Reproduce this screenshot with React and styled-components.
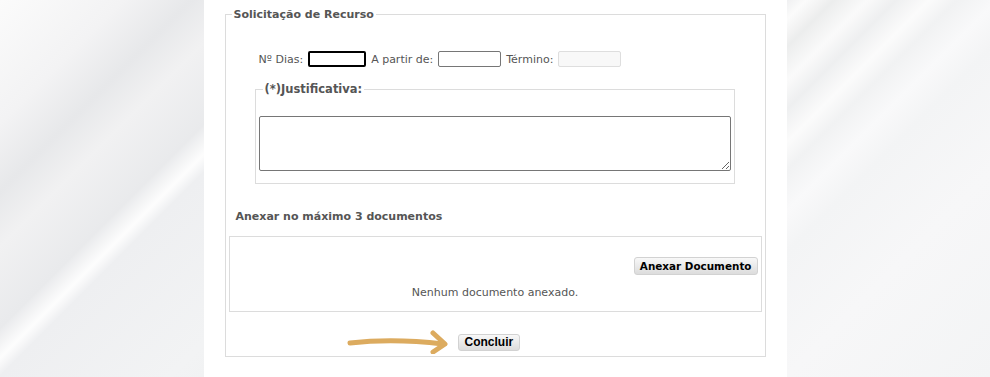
import React from 'react'
import styled, { createGlobalStyle } from 'styled-components'

const GlobalStyle = createGlobalStyle`
  html, body {
    margin: 0;
    padding: 0;
  }
  body {
    font-family: "DejaVu Sans", Verdana, sans-serif;
    font-size: 11px;
    color: #555;
  }
`

// fundo cinza com faixas diagonais
const Page = styled.div`
  width: 990px;
  height: 377px;
  overflow: hidden;
  background: linear-gradient(
    135deg,
    #fbfbfb 0%,
    #f3f3f4 9%,
    #e7e8ea 14%,
    #f1f1f2 18%,
    #e9eaec 24%,
    #fdfdfd 26.2%,
    #eeeff1 27.5%,
    #f2f3f4 40%,
    #ebeced 57%,
    #fbfbfb 59%,
    #eceded 61%,
    #fafafa 63.5%,
    #eeeff0 65.5%,
    #fbfbfb 68%,
    #f1f2f3 70%,
    #f9f9fa 73%,
    #f3f4f5 76%,
    #f7f7f8 85%,
    #f3f4f5 100%
  );
`

const Column = styled.div`
  width: 583px;
  height: 100%;
  margin: 0 auto;
  background: #fff;
  box-sizing: border-box;
  padding: 8px 21px 0 21px;
`

const Fieldset = styled.fieldset`
  margin: 0;
  padding: 0 0 2px;
  border: 1px solid #dcdcdc;
  min-width: 0;
`

const Legend = styled.legend`
  margin-left: 6px;
  padding: 0 2px;
  font-weight: bold;
  font-size: 11px;
  line-height: 13px;
  color: #555;
`

const Row = styled.div`
  display: flex;
  align-items: center;
  gap: 5px;
  margin: 30px 0 0 33px;
  height: 16px;
`

const Label = styled.span`
  white-space: nowrap;
`

const Input = styled.input`
  box-sizing: border-box;
  width: ${p => p.$w}px;
  height: 16px;
  padding: 0 2px;
  margin: 0;
  font: inherit;
  border: ${p => (p.$focused ? '2px solid #000' : '1px solid #767676')};
  border-radius: 2px;
  background: ${p => (p.disabled ? '#f8f8f8' : '#fff')};
  ${p => p.disabled && 'border-color: #dedede;'}
  outline: none;
`

const InnerFieldset = styled.fieldset`
  margin: 16px 30px 0 29px;
  padding: 20px 3px 12px;
  border: 1px solid #dcdcdc;
  min-width: 0;
`

const InnerLegend = styled(Legend)`
  margin-left: 4px;
  font-size: 11.5px;
`

const TextArea = styled.textarea`
  display: block;
  box-sizing: border-box;
  width: 100%;
  height: 55px;
  margin: 0;
  border: 1px solid #767676;
  border-radius: 2px;
  resize: both;
  font: inherit;
`

const SectionTitle = styled.div`
  margin: 26px 0 0 10px;
  font-weight: bold;
  font-size: 11px;
  line-height: 13px;
  color: #555;
`

const AttachBox = styled.div`
  margin: 13px 3px 0 3px;
  height: 76px;
  box-sizing: border-box;
  border: 1px solid #dcdcdc;
  padding: 20px 3px 0;
  display: flex;
  flex-direction: column;
`

const Button = styled.button`
  box-sizing: border-box;
  height: ${p => p.$h}px;
  padding: 0 ${p => p.$px}px;
  margin: 0;
  border: 1px solid #d2d2d2;
  border-radius: 3px;
  background: linear-gradient(#f8f8f8, #dcdcdc);
  color: #000;
  font-weight: bold;
  font-size: ${p => p.$fs}px;
  font-family: ${p => (p.$arial ? '"Liberation Sans", Arial, sans-serif' : '"DejaVu Sans", Verdana, sans-serif')};
  cursor: pointer;
`

const AttachActions = styled.div`
  display: flex;
  justify-content: flex-end;
`

const EmptyText = styled.div`
  margin-top: 11px;
  text-align: center;
  line-height: 13px;
  color: #555;
`

const Footer = styled.div`
  display: flex;
  align-items: center;
  gap: 7px;
  margin: 18px 0 0 121px;
`

const Arrow = () => (
  <svg width="104" height="24" viewBox="0 0 104 24" fill="none">
    <path
      d="M3 13 C 30 10, 62 10, 96 14"
      stroke="#dcab5f"
      strokeWidth="5"
      strokeLinecap="round"
    />
    <path
      d="M86 3 L 98 14 L 86 22"
      stroke="#dcab5f"
      strokeWidth="5"
      strokeLinecap="round"
      strokeLinejoin="round"
    />
  </svg>
)

export default function App() {
  return (
    <>
      <GlobalStyle />
      <Page>
        <Column>
          <Fieldset>
            <Legend>Solicitação de Recurso</Legend>

            <Row>
              <Label>Nº Dias:</Label>
              <Input $w={58} $focused />
              <Label>A partir de:</Label>
              <Input $w={63} />
              <Label>Término:</Label>
              <Input $w={63} disabled />
            </Row>

            <InnerFieldset>
              <InnerLegend>(*)Justificativa:</InnerLegend>
              <TextArea />
            </InnerFieldset>

            <SectionTitle>Anexar no máximo 3 documentos</SectionTitle>

            <AttachBox>
              <AttachActions>
                <Button $h={18} $px={5} $fs={10.4}>Anexar Documento</Button>
              </AttachActions>
              <EmptyText>Nenhum documento anexado.</EmptyText>
            </AttachBox>

            <Footer>
              <Arrow />
              <Button $h={17} $px={6} $fs={12} $arial>Concluir</Button>
            </Footer>
          </Fieldset>
        </Column>
      </Page>
    </>
  )
}
